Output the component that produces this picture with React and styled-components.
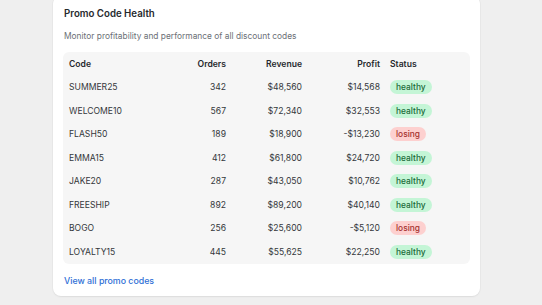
import React from "react";
import styled, { createGlobalStyle } from "styled-components";

const codes = [
  { code: "SUMMER25", orders: 342, revenue: "$48,560", profit: "$14,568", status: "healthy" },
  { code: "WELCOME10", orders: 567, revenue: "$72,340", profit: "$32,553", status: "healthy" },
  { code: "FLASH50", orders: 189, revenue: "$18,900", profit: "-$13,230", status: "losing" },
  { code: "EMMA15", orders: 412, revenue: "$61,800", profit: "$24,720", status: "healthy" },
  { code: "JAKE20", orders: 287, revenue: "$43,050", profit: "$10,762", status: "healthy" },
  { code: "FREESHIP", orders: 892, revenue: "$89,200", profit: "$40,140", status: "healthy" },
  { code: "BOGO", orders: 256, revenue: "$25,600", profit: "-$5,120", status: "losing" },
  { code: "LOYALTY15", orders: 445, revenue: "$55,625", profit: "$22,250", status: "healthy" },
];

const App = () => {
  return (
    <>
      <GlobalStyle />
      <Page>
        <Card>
          <Title>Promo Code Health</Title>
          <Subtitle>Monitor profitability and performance of all discount codes</Subtitle>
          <Panel>
            <Row>
              <HeadCell>Code</HeadCell>
              <HeadCell align="right">Orders</HeadCell>
              <HeadCell align="right">Revenue</HeadCell>
              <HeadCell align="right">Profit</HeadCell>
              <HeadCell status>Status</HeadCell>
            </Row>
            {codes.map((item) => (
              <Row key={item.code}>
                <Cell>{item.code}</Cell>
                <Cell align="right">{item.orders}</Cell>
                <Cell align="right">{item.revenue}</Cell>
                <Cell align="right">{item.profit}</Cell>
                <Cell status>
                  <Badge losing={item.status === "losing"}>{item.status}</Badge>
                </Cell>
              </Row>
            ))}
          </Panel>
          <ViewAll href="#">View all promo codes</ViewAll>
        </Card>
      </Page>
    </>
  );
};

export default App;

const GlobalStyle = createGlobalStyle`
  html, body {
    margin: 0;
    background: #efefef;
    font-family: Inter, "Noto Sans", sans-serif;
  }
`;

const Page = styled.div`
  height: 305px;
  overflow: hidden;
`;

const Card = styled.div`
  margin: -4px 0 0 53px;
  width: 427px;
  box-sizing: border-box;
  background: #fff;
  border-radius: 8px;
  padding: 8px 10px 7px 11px;
  box-shadow: 0 1px 2px rgba(0, 0, 0, 0.06), 0 0 0 1px rgba(0, 0, 0, 0.02);
  display: flex;
  flex-direction: column;
`;

const Title = styled.div`
  font-size: 9.7px;
  font-weight: 600;
  line-height: 20px;
  color: #26292d;
`;

const Subtitle = styled.div`
  margin-top: 4px;
  font-size: 8.4px;
  line-height: 16px;
  color: #6b6f76;
`;

const Panel = styled.div`
  margin: 8px 0 0 -1px;
  background: #f6f6f6;
  border-radius: 6px;
  padding: 0 6px;
`;

const Row = styled.div`
  display: grid;
  grid-template-columns: 100px 57px 76px 78px 1fr;
  height: 23.5px;
  align-items: center;
`;

const Cell = styled.div`
  font-size: 8.6px;
  color: #34373b;
  padding-left: ${({ status }) => (status ? "10px" : "0")};
  display: flex;
  justify-content: ${({ align }) => (align === "right" ? "flex-end" : "flex-start")};
`;

const HeadCell = styled(Cell)`
  font-weight: 600;
  color: #26292d;
`;

const Badge = styled.span`
  display: inline-block;
  font-size: 8.4px;
  line-height: 14px;
  padding: 0 6px;
  border-radius: 7px;
  font-weight: 500;
  background: ${({ losing }) => (losing ? "#fdd0cf" : "#c4f5d6")};
  color: ${({ losing }) => (losing ? "#a5322f" : "#1b6a3a")};
`;

const ViewAll = styled.a`
  margin-top: 9px;
  font-size: 8.8px;
  line-height: 16px;
  font-weight: 500;
  color: #2f6fd6;
  text-decoration: none;
`;
